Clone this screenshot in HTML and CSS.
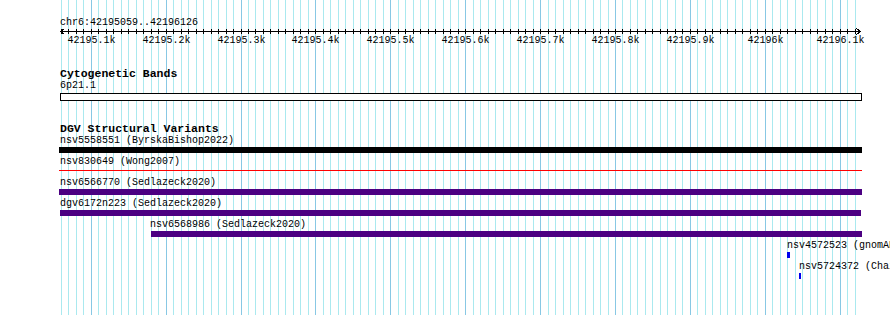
FILE: index.html
```html
<!DOCTYPE html>
<html lang="en">
<head>
  <meta charset="UTF-8">
  <meta name="viewport" content="width=device-width, initial-scale=1.0">
  <title>DGV Structural Variants</title>
  <link rel="stylesheet" href="styles.css">
</head>
<body>

  <div class="view">

    <svg class="grid js-grid" width="890" height="315"></svg>

    <div class="tracks">

      <div class="ruler">
        <p class="locus">chr6:42195059..42196126</p>
        <svg class="scale js-scale" width="890" height="22">
          <line class="axis" x1="60" y1="3.5" x2="861" y2="3.5" />
          <polyline class="axis" points="64.5,0.5 60.5,3.5 64.5,6.5" />
          <polyline class="axis" points="856.5,0.5 860.5,3.5 856.5,6.5" />
        </svg>
      </div>

      <div class="track track-first">
        <p class="track-title">Cytogenetic Bands</p>
        <p class="label">6p21.1</p>
        <div class="band"></div>
      </div>

      <div class="track track-sv">
        <p class="track-title">DGV Structural Variants</p>

        <div class="feature">
          <p class="label" style="margin-left: 60px;">nsv5558551 (ByrskaBishop2022)</p>
          <div class="bar bar-black" style="margin-left: 59px; width: 803px;"></div>
        </div>

        <div class="feature">
          <p class="label" style="margin-left: 60px;">nsv830649 (Wong2007)</p>
          <div class="bar bar-line" style="margin-left: 59px; width: 803px;"></div>
        </div>

        <div class="feature">
          <p class="label" style="margin-left: 60px;">nsv6566770 (Sedlazeck2020)</p>
          <div class="bar bar-indigo" style="margin-left: 59px; width: 803px;"></div>
        </div>

        <div class="feature">
          <p class="label" style="margin-left: 60px;">dgv6172n223 (Sedlazeck2020)</p>
          <div class="bar bar-indigo" style="margin-left: 60px; width: 801px;"></div>
        </div>

        <div class="feature">
          <p class="label" style="margin-left: 150px;">nsv6568986 (Sedlazeck2020)</p>
          <div class="bar bar-indigo" style="margin-left: 151px; width: 711px;"></div>
        </div>

        <div class="feature">
          <p class="label" style="margin-left: 787px;">nsv4572523 (gnomAD_v2.1)</p>
          <div class="bar bar-blue" style="margin-left: 787px; width: 3px;"></div>
        </div>

        <div class="feature">
          <p class="label" style="margin-left: 799px;">nsv5724372 (Chaisson2019)</p>
          <div class="bar bar-blue" style="margin-left: 799px; width: 2px;"></div>
        </div>

      </div>

    </div>

  </div>

  <script>
    const regionStart = 42195059;
    const pxPerBp = 0.749;
    const svgNs = 'http://www.w3.org/2000/svg';

    function toX(bp) {
      return Math.floor(60.5 + (bp - regionStart) * pxPerBp) + 0.5;
    }

    const grid = document.querySelector('.js-grid');
    const scale = document.querySelector('.js-scale');

    for (let bp = 42195060; bp <= 42196120; bp += 10) {
      const x = toX(bp);
      const major = bp % 100 === 0;

      const gridLine = document.createElementNS(svgNs, 'line');
      gridLine.setAttribute('x1', x);
      gridLine.setAttribute('x2', x);
      gridLine.setAttribute('y1', 0);
      gridLine.setAttribute('y2', 315);
      gridLine.setAttribute('class', major ? 'major' : 'minor');
      grid.appendChild(gridLine);

      const tick = document.createElementNS(svgNs, 'line');
      tick.setAttribute('x1', x);
      tick.setAttribute('x2', x);
      tick.setAttribute('y1', 1);
      tick.setAttribute('y2', 6);
      tick.setAttribute('class', 'axis');
      scale.appendChild(tick);

      if (major) {
        const text = document.createElementNS(svgNs, 'text');
        text.setAttribute('x', x);
        text.setAttribute('y', 15);
        text.textContent = (bp / 1000) + 'k';
        scale.appendChild(text);
      }
    }
  </script>

</body>
</html>
```

FILE: styles.css
```css
body {
  margin: 0;
  background-color: #fff;
  color: #000;
  font-family: "Liberation Mono", "DejaVu Sans Mono", monospace;
}

p {
  margin: 0;
}

.view {
  position: relative;
  width: 890px;
  height: 315px;
  overflow: hidden;
}

.grid {
  position: absolute;
  top: 0;
  left: 0;
  shape-rendering: crispEdges;
}

.grid .minor {
  stroke: #aae9ef;
  stroke-width: 1;
}

.grid .major {
  stroke: #88c8e4;
  stroke-width: 1;
}

.tracks {
  position: relative;
}

.locus {
  padding-top: 17px;
  margin-left: 60px;
  font-size: 10px;
  line-height: 11px;
}

.scale {
  display: block;
}

.scale .axis {
  fill: none;
  stroke: #000;
  stroke-width: 1;
  shape-rendering: crispEdges;
}

.scale text {
  font-family: "Liberation Mono", monospace;
  font-size: 10px;
  text-anchor: middle;
  fill: #000;
}

.track-title {
  margin-left: 60px;
  font-size: 11.5px;
  font-weight: bold;
  line-height: 12px;
}

.track-first {
  margin-top: 18px;
}

.track-sv {
  margin-top: 22px;
}

.label {
  margin-left: 60px;
  font-size: 10px;
  line-height: 11px;
  white-space: nowrap;
}

.band {
  box-sizing: border-box;
  width: 802px;
  height: 8px;
  margin-top: 2px;
  margin-left: 60px;
  background-color: #fff;
  border: 1px solid #000;
}

.feature {
  height: 21px;
}

.bar {
  height: 6px;
  margin-top: 1px;
}

.bar-black {
  background-color: #000;
}

.bar-indigo {
  background-color: #4b0082;
}

.bar-blue {
  background-color: #0000ee;
}

.bar-line {
  height: 1px;
  margin-top: 3px;
  background-color: #f00;
}
```
